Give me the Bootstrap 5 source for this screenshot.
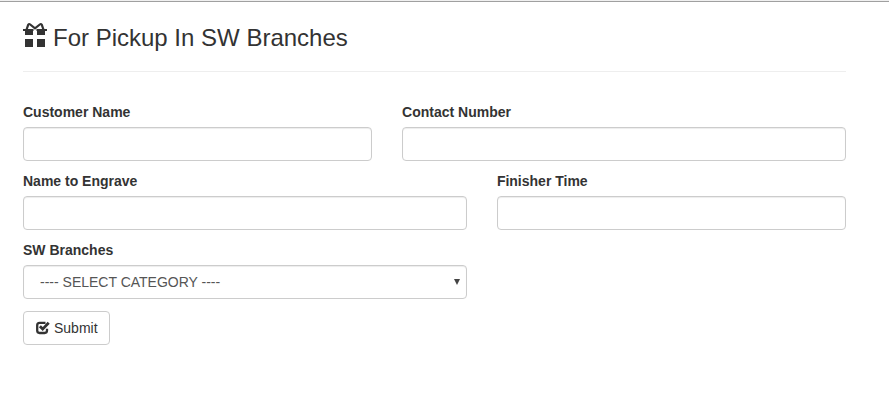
<!DOCTYPE html>
<html lang="en">
<head>
<meta charset="utf-8">
<meta name="viewport" content="width=device-width, initial-scale=1">
<title>For Pickup In SW Branches</title>
<link href="https://cdn.jsdelivr.net/npm/bootstrap@5.3.0/dist/css/bootstrap.min.css" rel="stylesheet">
<style>
body { font: 14px/20px "Liberation Sans", Arial, sans-serif; color: #333; background: #fff; overflow: hidden; }
.top-edge { height: 2px; background: #a0a0a0; border-top: 1px solid #f0f0f0; }
.page-panel { width: 823px; margin-left: 23px; padding-top: 20px; }
.page-title { font-size: 24px; line-height: 26px; height: 50px; border-bottom: 1px solid #eee; margin-bottom: 30px; color: #333; font-weight: 400; }
.page-title span { padding-top: 3px; margin-left: 6px; }
.form-row { --bs-gutter-x: 30px; margin-bottom: 10px; }
.col-narrow { flex: 0 0 auto; width: 44.4444%; }
.col-wide { flex: 0 0 auto; width: 55.5556%; }
.form-label { display: block; font-weight: 700; margin-bottom: 5px; line-height: 20px; }
.form-control { height: 34px; border: 1px solid #ccc; border-radius: 4px; padding: 6px 12px; font-size: 14px; line-height: 20px; color: #555; box-shadow: inset 0 1px 1px rgba(0,0,0,.075); }
.select-wrap::after { content: ""; position: absolute; right: 7px; top: 14px; border: solid transparent; border-width: 6px 3px 0; border-top-color: #444; }
select.form-control { padding-left: 16px; }
.btn-submit { height: 34px; width: 87px; border: 1px solid #ccc; border-radius: 4px; padding: 6px 12px; font-size: 14px; line-height: 20px; color: #333; background: #fff; margin-top: 12px; }
</style>
</head>
<body>
<div class="top-edge"></div>
<main class="page-panel">
  <h1 class="page-title d-flex align-items-start">
    <svg width="24" height="26" viewBox="0 0 24 26" aria-hidden="true">
      <path d="M2 8h8v5H2zM14 8h8v5h-8zM2 17h8v8H2zM14 17h8v8h-8z" fill="#333"/>
      <path d="M0 8H10.5M13.5 8H24M3.4 8L5.2 2.8Q5.9 1.4 7.2 2.5L12 6.4L16.8 2.5Q18.1 1.4 18.8 2.8L20.6 8" fill="none" stroke="#333" stroke-width="2.2"/>
    </svg>
    <span>For Pickup In SW Branches</span>
  </h1>
  <form onsubmit="return false">
    <div class="row form-row">
      <div class="col-narrow">
        <label class="form-label" for="customer">Customer Name</label>
        <input class="form-control" id="customer" type="text">
      </div>
      <div class="col-wide">
        <label class="form-label" for="contact">Contact Number</label>
        <input class="form-control" id="contact" type="text">
      </div>
    </div>
    <div class="row form-row">
      <div class="col-wide">
        <label class="form-label" for="engrave">Name to Engrave</label>
        <input class="form-control" id="engrave" type="text">
      </div>
      <div class="col-narrow">
        <label class="form-label" for="finish">Finisher Time</label>
        <input class="form-control" id="finish" type="text">
      </div>
    </div>
    <div class="row form-row">
      <div class="col-wide">
        <label class="form-label" for="branch">SW Branches</label>
        <div class="select-wrap position-relative">
          <select class="form-control" id="branch"><option>---- SELECT CATEGORY ----</option></select>
        </div>
      </div>
    </div>
    <button class="btn btn-submit d-flex align-items-center" type="submit">
      <svg class="flex-shrink-0" width="14" height="14" viewBox="0 0 14 14" aria-hidden="true">
        <path d="M9.5 1.8H3.6Q1.2 1.8 1.2 4.3V9.6Q1.2 12 3.6 12H8.6Q11 12 11 9.6V7.8" fill="none" stroke="#333" stroke-width="2.3"/>
        <path d="M3.9 5.3L6.7 8.1L12.7 1.7" fill="none" stroke="#333" stroke-width="2.8"/>
      </svg>
      <span class="ps-1">Submit</span>
    </button>
  </form>
</main>
<script src="https://cdn.jsdelivr.net/npm/bootstrap@5.3.0/dist/js/bootstrap.bundle.min.js"></script>
</body>
</html>
